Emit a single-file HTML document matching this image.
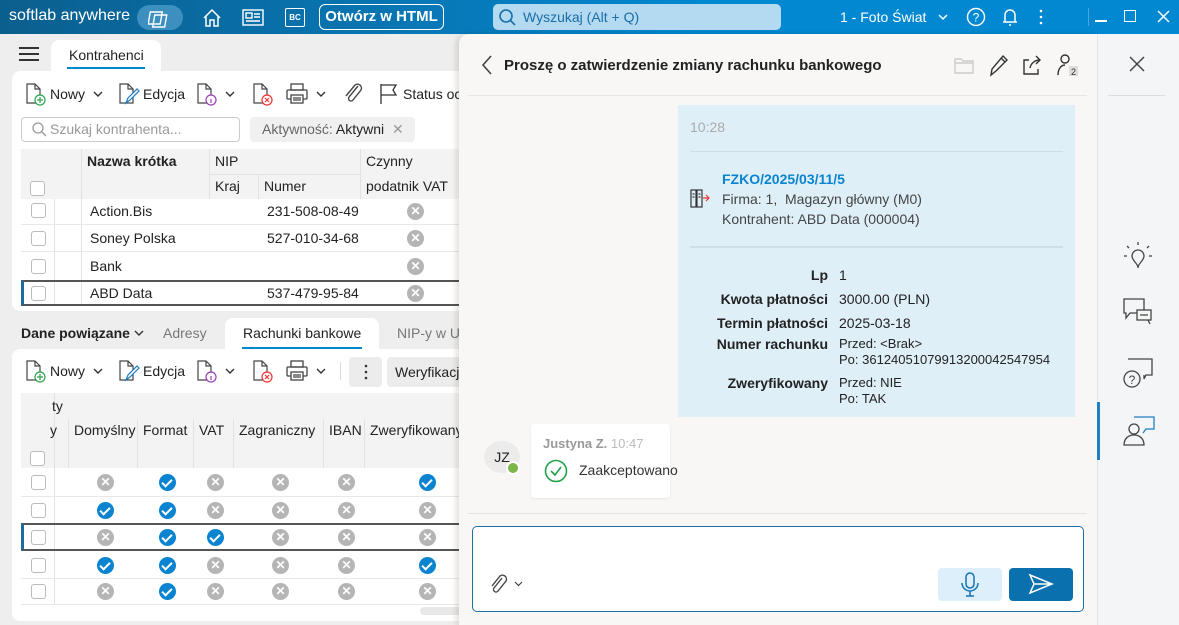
<!DOCTYPE html>
<html><head><meta charset="utf-8"><style>
*{box-sizing:border-box;margin:0;padding:0}
body{width:1179px;height:625px;overflow:hidden;font-family:"Liberation Sans",sans-serif;font-size:14px;color:#222;background:#eee;position:relative}
.a{position:absolute}
.top{left:0;top:0;width:1179px;height:34px;background:linear-gradient(90deg,#0b5f8e 0%,#0877b5 35%,#0288d1 60%,#0288d1 100%);color:#fff}
.card{background:#fff;border-radius:8px}
.cb{width:15px;height:15px;border:1px solid #bbb;border-radius:3px;background:#fff}
.x{width:17px;height:17px;border-radius:50%;background:#b5b5b5;color:#fff;font-size:12px;line-height:17px;text-align:center;font-weight:bold}
.ok{width:17px;height:17px;border-radius:50%;background:#0a84d0}
.ok:after{content:"";position:absolute;left:5px;top:3px;width:4px;height:8px;border:solid #fff;border-width:0 2px 2px 0;transform:rotate(45deg)}
.tb{font-size:14px;color:#222}
</style></head><body>
<svg width="0" height="0" style="position:absolute"><defs>
<g id="doc" fill="none" stroke="#444" stroke-width="1.2"><path d="M2 2h8l5 5v14H2z"/><path d="M10 2v5h5"/></g>
</defs></svg>
<!-- title bar -->
<div class="a top">
 <div class="a" style="left:9px;top:7px;font-size:16px">softlab anywhere</div>
 <div class="a" style="left:137px;top:5px;width:46px;height:25px;border-radius:13px;background:#3d8fc0"></div>
 <svg class="a" style="left:148px;top:8px" width="24" height="20" fill="none" stroke="#fff" stroke-width="1.4"><rect x="3" y="4" width="12" height="12" transform="skewX(-10)"/><rect x="8" y="7" width="12" height="12" transform="skewX(-10)"/></svg>
 <svg class="a" style="left:202px;top:8px" width="20" height="20" fill="none" stroke="#fff" stroke-width="1.5"><path d="M2 10L10 2l8 8M4 8v10h4v-6h4v6h4V8"/></svg>
 <svg class="a" style="left:242px;top:9px" width="22" height="17" fill="none" stroke="#fff" stroke-width="1.4"><rect x="1" y="1" width="20" height="15"/><rect x="4" y="4" width="6" height="5"/><path d="M12 5h6M12 8h6M4 12h14"/></svg>
 <div class="a" style="left:285px;top:8px;width:20px;height:19px;border:1.5px solid #fff;border-radius:2px;font-size:8px;text-align:center;line-height:17px;font-weight:bold">BC</div>
 <div class="a" style="left:319px;top:4px;width:125px;height:26px;border:1.5px solid #fff;border-radius:6px;text-align:center;line-height:23px;font-size:15px;font-weight:bold">Otwórz w HTML</div>
 <div class="a" style="left:493px;top:4px;width:288px;height:26px;border-radius:5px;background:#b3daf1;color:#1a6da6;font-size:14px;line-height:26px;padding-left:30px">Wyszukaj (Alt + Q)</div>
 <svg class="a" style="left:499px;top:9px" width="18" height="18" fill="none" stroke="#1a6da6" stroke-width="1.6"><circle cx="7" cy="7" r="6"/><path d="M11 11l5 5"/></svg>
 <div class="a" style="left:840px;top:9px;font-size:14px">1 - Foto Świat</div>
 <svg class="a" style="left:938px;top:14px" width="10" height="8" fill="none" stroke="#fff" stroke-width="1.5"><path d="M1 1l4 4 4-4"/></svg>
 <svg class="a" style="left:966px;top:7px" width="20" height="20" fill="none" stroke="#fff" stroke-width="1.4"><circle cx="10" cy="10" r="8.5"/><text x="10" y="14.5" font-size="12" fill="#fff" stroke="none" text-anchor="middle" font-family="Liberation Sans">?</text></svg>
 <svg class="a" style="left:1001px;top:6px" width="18" height="22" fill="none" stroke="#fff" stroke-width="1.5"><path d="M4 16V9a5 5 0 0110 0v7H2h14M8 19h2"/></svg>
 <svg class="a" style="left:1038px;top:8px" width="6" height="18" fill="#fff"><circle cx="3" cy="3" r="1.3"/><circle cx="3" cy="9" r="1.3"/><circle cx="3" cy="15" r="1.3"/></svg>
 <div class="a" style="left:1088px;top:8px;width:1px;height:18px;background:#4aa6de"></div>
 <div class="a" style="left:1095px;top:20px;width:12px;height:1.5px;background:#fff"></div>
 <div class="a" style="left:1124px;top:10px;width:12px;height:12px;border:1.5px solid #fff"></div>
 <svg class="a" style="left:1157px;top:10px" width="13" height="13" stroke="#fff" stroke-width="1.5"><path d="M1 1l11 11M12 1L1 12"/></svg>
</div>

<!-- left top tab -->
<div class="a" style="left:19px;top:47px;width:20px;height:14px;border-top:2px solid #333;border-bottom:2px solid #333"><div style="margin-top:4px;height:2px;background:#333"></div></div>
<div class="a" style="left:51px;top:40px;width:110px;height:40px;background:#fff;border-radius:8px 8px 0 0"></div>
<div class="a" style="left:69px;top:47px;font-size:14px">Kontrahenci</div>
<div class="a" style="left:67px;top:67px;width:78px;height:2px;background:#0288d1"></div>
<div class="a card" style="left:12px;top:71px;width:460px;height:240px"></div>
<!-- toolbar 1 -->
<svg class="a" style="left:25px;top:82px" width="22" height="24"><use href="#doc"/><circle cx="15" cy="18" r="5" fill="#fff" stroke="#2aa34a" stroke-width="1.2"/><path d="M15 15v6M12 18h6" stroke="#2aa34a" stroke-width="1.2"/></svg>
<div class="a tb" style="left:50px;top:86px">Nowy</div>
<svg class="a" style="left:93px;top:91px" width="10" height="7" fill="none" stroke="#333" stroke-width="1.4"><path d="M1 1l4 4 4-4"/></svg>
<svg class="a" style="left:118px;top:82px" width="24" height="24"><use href="#doc"/><path d="M8 21l2-5 9-9 2 2-9 9z" fill="#fff" stroke="#1a7cc4" stroke-width="1.2"/></svg>
<div class="a tb" style="left:143px;top:86px">Edycja</div>
<svg class="a" style="left:196px;top:82px" width="22" height="24"><use href="#doc"/><circle cx="15" cy="18" r="5" fill="#fff" stroke="#9b3fb4" stroke-width="1.2"/><path d="M15 17v4" stroke="#9b3fb4" stroke-width="1.2"/></svg>
<svg class="a" style="left:225px;top:91px" width="10" height="7" fill="none" stroke="#333" stroke-width="1.4"><path d="M1 1l4 4 4-4"/></svg>
<svg class="a" style="left:252px;top:82px" width="22" height="24"><use href="#doc"/><circle cx="15" cy="18" r="5" fill="#fff" stroke="#e33" stroke-width="1.2"/><path d="M13 16l4 4M17 16l-4 4" stroke="#e33" stroke-width="1.2"/></svg>
<svg class="a" style="left:286px;top:83px" width="22" height="22" fill="none" stroke="#444" stroke-width="1.3"><rect x="5" y="1" width="12" height="6"/><rect x="1" y="7" width="20" height="9" rx="1"/><rect x="5" y="12" width="12" height="8" fill="#fff"/><path d="M7 15h8M7 17h8"/></svg>
<svg class="a" style="left:316px;top:91px" width="10" height="7" fill="none" stroke="#333" stroke-width="1.4"><path d="M1 1l4 4 4-4"/></svg>
<svg class="a" style="left:343px;top:82px" width="20" height="24" fill="none" stroke="#444" stroke-width="1.4"><path d="M15 4L6 15a2.5 2.5 0 004 3l8-10a4 4 0 00-6-5L3 14"/></svg>
<svg class="a" style="left:379px;top:83px" width="20" height="22" fill="none" stroke="#333" stroke-width="1.3"><path d="M2 1v20M2 2h15l-3 5 3 5H2"/></svg>
<div class="a tb" style="left:403px;top:86px">Status oc</div>
<div class="a" style="left:21px;top:117px;width:219px;height:25px;border:1px solid #ccc;border-radius:4px;color:#999;line-height:23px;padding-left:28px;font-size:14px">Szukaj kontrahenta...</div>
<svg class="a" style="left:32px;top:122px" width="15" height="15" fill="none" stroke="#999" stroke-width="1.3"><circle cx="6" cy="6" r="5"/><path d="M10 10l4 4"/></svg>
<div class="a" style="left:250px;top:117px;width:165px;height:25px;background:#f0f0f0;border-radius:4px;line-height:25px;padding-left:12px;font-size:14px;color:#666">Aktywność: <span style="color:#222">Aktywni</span> <span style="color:#999;margin-left:4px">✕</span></div>
<!-- grid 1 -->
<div class="a" style="left:21px;top:149px;width:439px;height:50px;background:#f3f3f3"></div>
<div class="a" style="left:81px;top:149px;width:1px;height:156px;background:#e2e2e2"></div>
<div class="a" style="left:54px;top:199px;width:1px;height:106px;background:#e2e2e2"></div>
<div class="a" style="left:209px;top:149px;width:1px;height:50px;background:#e2e2e2"></div>
<div class="a" style="left:258px;top:174px;width:1px;height:25px;background:#e2e2e2"></div>
<div class="a" style="left:360px;top:149px;width:1px;height:50px;background:#e2e2e2"></div>
<div class="a" style="left:209px;top:174px;width:151px;height:1px;background:#e2e2e2"></div>
<div class="a" style="left:87px;top:153px;font-weight:bold;font-size:14px">Nazwa krótka</div>
<div class="a" style="left:215px;top:153px">NIP</div>
<div class="a" style="left:366px;top:153px">Czynny</div>
<div class="a" style="left:215px;top:178px">Kraj</div>
<div class="a" style="left:264px;top:178px">Numer</div>
<div class="a" style="left:366px;top:178px">podatnik VAT</div>
<div class="a cb" style="left:30px;top:181px"></div>
<div class="a" style="left:21px;top:224px;width:439px;height:1px;background:#e8e8e8"></div>
<div class="a" style="left:21px;top:251px;width:439px;height:1px;background:#e8e8e8"></div>
<div class="a" style="left:21px;top:280px;width:439px;height:26px;border:2px solid #555;border-left:3px solid #1c6aa0;border-right:none"></div>
<div class="a cb" style="left:31px;top:203px"></div><div class="a" style="left:90px;top:203px">Action.Bis</div><div class="a" style="left:267px;top:203px">231-508-08-49</div><div class="a x" style="left:407px;top:203px">✕</div>
<div class="a cb" style="left:31px;top:231px"></div><div class="a" style="left:90px;top:230px">Soney Polska</div><div class="a" style="left:267px;top:230px">527-010-34-68</div><div class="a x" style="left:407px;top:230px">✕</div>
<div class="a cb" style="left:31px;top:259px"></div><div class="a" style="left:90px;top:258px">Bank</div><div class="a x" style="left:407px;top:258px">✕</div>
<div class="a cb" style="left:31px;top:286px"></div><div class="a" style="left:90px;top:285px">ABD Data</div><div class="a" style="left:267px;top:285px">537-479-95-84</div><div class="a x" style="left:407px;top:285px">✕</div>

<!-- bottom tabs -->
<div class="a" style="left:21px;top:325px;font-weight:bold">Dane powiązane</div>
<svg class="a" style="left:134px;top:330px" width="10" height="7" fill="none" stroke="#333" stroke-width="1.4"><path d="M1 1l4 4 4-4"/></svg>
<div class="a" style="left:163px;top:325px;color:#777">Adresy</div>
<div class="a" style="left:225px;top:318px;width:154px;height:40px;background:#fff;border-radius:8px 8px 0 0"></div>
<div class="a" style="left:243px;top:325px">Rachunki bankowe</div>
<div class="a" style="left:242px;top:347px;width:120px;height:2px;background:#0288d1"></div>
<div class="a" style="left:397px;top:325px;color:#777">NIP-y w U</div>
<div class="a card" style="left:12px;top:349px;width:460px;height:272px"></div>
<svg class="a" style="left:25px;top:359px" width="22" height="24"><use href="#doc"/><circle cx="15" cy="18" r="5" fill="#fff" stroke="#2aa34a" stroke-width="1.2"/><path d="M15 15v6M12 18h6" stroke="#2aa34a" stroke-width="1.2"/></svg>
<div class="a tb" style="left:50px;top:363px">Nowy</div>
<svg class="a" style="left:93px;top:368px" width="10" height="7" fill="none" stroke="#333" stroke-width="1.4"><path d="M1 1l4 4 4-4"/></svg>
<svg class="a" style="left:118px;top:359px" width="24" height="24"><use href="#doc"/><path d="M8 21l2-5 9-9 2 2-9 9z" fill="#fff" stroke="#1a7cc4" stroke-width="1.2"/></svg>
<div class="a tb" style="left:143px;top:363px">Edycja</div>
<svg class="a" style="left:196px;top:359px" width="22" height="24"><use href="#doc"/><circle cx="15" cy="18" r="5" fill="#fff" stroke="#9b3fb4" stroke-width="1.2"/><path d="M15 17v4" stroke="#9b3fb4" stroke-width="1.2"/></svg>
<svg class="a" style="left:225px;top:368px" width="10" height="7" fill="none" stroke="#333" stroke-width="1.4"><path d="M1 1l4 4 4-4"/></svg>
<svg class="a" style="left:252px;top:359px" width="22" height="24"><use href="#doc"/><circle cx="15" cy="18" r="5" fill="#fff" stroke="#e33" stroke-width="1.2"/><path d="M13 16l4 4M17 16l-4 4" stroke="#e33" stroke-width="1.2"/></svg>
<svg class="a" style="left:286px;top:360px" width="22" height="22" fill="none" stroke="#444" stroke-width="1.3"><rect x="5" y="1" width="12" height="6"/><rect x="1" y="7" width="20" height="9" rx="1"/><rect x="5" y="12" width="12" height="8" fill="#fff"/><path d="M7 15h8M7 17h8"/></svg>
<svg class="a" style="left:316px;top:368px" width="10" height="7" fill="none" stroke="#333" stroke-width="1.4"><path d="M1 1l4 4 4-4"/></svg>
<div class="a" style="left:340px;top:362px;width:1px;height:18px;background:#ddd"></div>
<div class="a" style="left:349px;top:357px;width:33px;height:30px;background:#ececec;border-radius:4px"></div>
<svg class="a" style="left:363px;top:363px" width="6" height="18" fill="#333"><circle cx="3" cy="3" r="1.3"/><circle cx="3" cy="9" r="1.3"/><circle cx="3" cy="15" r="1.3"/></svg>
<div class="a" style="left:387px;top:357px;width:80px;height:30px;background:#ececec;border-radius:4px;line-height:30px;padding-left:8px">Weryfikacja</div>
<div class="a" style="left:21px;top:393px;width:439px;height:75px;background:#f3f3f3"></div>
<div class="a" style="left:54px;top:393px;width:1px;height:212px;background:#e2e2e2"></div>
<div class="a" style="left:52px;top:398px">ty</div>
<div class="a" style="left:50px;top:422px">y</div>
<div class="a" style="left:74px;top:422px">Domyślny</div>
<div class="a" style="left:143px;top:422px">Format</div>
<div class="a" style="left:199px;top:422px">VAT</div>
<div class="a" style="left:239px;top:422px">Zagraniczny</div>
<div class="a" style="left:329px;top:422px">IBAN</div>
<div class="a" style="left:370px;top:422px">Zweryfikowany</div>
<div class="a" style="left:68px;top:419px;width:1px;height:49px;background:#e2e2e2"></div>
<div class="a" style="left:137px;top:419px;width:1px;height:49px;background:#e2e2e2"></div>
<div class="a" style="left:193px;top:419px;width:1px;height:49px;background:#e2e2e2"></div>
<div class="a" style="left:233px;top:419px;width:1px;height:49px;background:#e2e2e2"></div>
<div class="a" style="left:323px;top:419px;width:1px;height:49px;background:#e2e2e2"></div>
<div class="a" style="left:364px;top:419px;width:1px;height:49px;background:#e2e2e2"></div>
<div class="a cb" style="left:30px;top:451px"></div>
<div class="a" style="left:21px;top:496px;width:439px;height:1px;background:#e8e8e8"></div>
<div class="a" style="left:21px;top:578px;width:439px;height:1px;background:#e8e8e8"></div>
<div class="a" style="left:21px;top:604px;width:439px;height:1px;background:#e8e8e8"></div>
<div class="a" style="left:21px;top:523px;width:439px;height:28px;border:2px solid #555;border-left:3px solid #1c6aa0;border-right:none"></div>
<div class="a cb" style="left:31px;top:475px"></div><div class="a x" style="left:97px;top:474px">✕</div><div class="a ok" style="left:159px;top:474px"></div><div class="a x" style="left:207px;top:474px">✕</div><div class="a x" style="left:272px;top:474px">✕</div><div class="a x" style="left:338px;top:474px">✕</div><div class="a ok" style="left:419px;top:474px"></div>
<div class="a cb" style="left:31px;top:503px"></div><div class="a ok" style="left:97px;top:502px"></div><div class="a ok" style="left:159px;top:502px"></div><div class="a x" style="left:207px;top:502px">✕</div><div class="a x" style="left:272px;top:502px">✕</div><div class="a x" style="left:338px;top:502px">✕</div><div class="a x" style="left:419px;top:502px">✕</div>
<div class="a cb" style="left:31px;top:530px"></div><div class="a x" style="left:97px;top:529px">✕</div><div class="a ok" style="left:159px;top:529px"></div><div class="a ok" style="left:207px;top:529px"></div><div class="a x" style="left:272px;top:529px">✕</div><div class="a x" style="left:338px;top:529px">✕</div><div class="a x" style="left:419px;top:529px">✕</div>
<div class="a cb" style="left:31px;top:558px"></div><div class="a ok" style="left:97px;top:557px"></div><div class="a ok" style="left:159px;top:557px"></div><div class="a x" style="left:207px;top:557px">✕</div><div class="a x" style="left:272px;top:557px">✕</div><div class="a x" style="left:338px;top:557px">✕</div><div class="a ok" style="left:419px;top:557px"></div>
<div class="a cb" style="left:31px;top:584px"></div><div class="a x" style="left:97px;top:583px">✕</div><div class="a ok" style="left:159px;top:583px"></div><div class="a x" style="left:207px;top:583px">✕</div><div class="a x" style="left:272px;top:583px">✕</div><div class="a x" style="left:338px;top:583px">✕</div><div class="a x" style="left:419px;top:583px">✕</div>
<div class="a" style="left:420px;top:607px;width:45px;height:8px;background:#e8e8e8;border-radius:4px"></div>

<!-- right chat panel -->
<div class="a" style="left:459px;top:34px;width:638px;height:591px;background:#f8f7f6;border-radius:10px 0 0 0;box-shadow:-3px 0 6px rgba(0,0,0,.12)"></div>
<svg class="a" style="left:480px;top:54px" width="14" height="22" fill="none" stroke="#444" stroke-width="1.6"><path d="M11 2L3 11l8 9"/></svg>
<div class="a" style="left:504px;top:57px;font-size:15px;font-weight:bold;color:#222">Proszę o zatwierdzenie zmiany rachunku bankowego</div>
<svg class="a" style="left:953px;top:55px" width="22" height="20" fill="none" stroke="#ccc" stroke-width="1.4"><path d="M2 4h6l2 2h10v12H2zM2 8h18"/></svg>
<svg class="a" style="left:987px;top:53px" width="22" height="24" fill="none" stroke="#333" stroke-width="1.4"><path d="M4 22l1-6L16 3l4 4L9 18zM14 5l4 4"/></svg>
<svg class="a" style="left:1021px;top:54px" width="22" height="22" fill="none" stroke="#333" stroke-width="1.4"><path d="M8 6H3v14h14v-5M9 14c1-5 5-8 10-8M15 2l4 4-4 4"/></svg>
<svg class="a" style="left:1055px;top:52px" width="24" height="26" fill="none" stroke="#333" stroke-width="1.4"><circle cx="10" cy="7" r="4"/><path d="M3 23c0-6 3-10 7-10"/><rect x="14" y="14" width="9" height="10" fill="#ddd" stroke="none"/><text x="18.5" y="23" font-size="9" fill="#333" stroke="none" text-anchor="middle" font-family="Liberation Sans">2</text></svg>
<div class="a" style="left:468px;top:95px;width:619px;height:1px;background:#e6e6e6"></div>
<div class="a" style="left:678px;top:105px;width:397px;height:312px;background:#dfeff8"></div>
<div class="a" style="left:690px;top:119px;color:#aaa;font-size:14px">10:28</div>
<div class="a" style="left:690px;top:151px;width:373px;height:1px;background:#cfdde5"></div>
<div class="a" style="left:722px;top:171px;color:#0a84d0;font-weight:bold;font-size:14px">FZKO/2025/03/11/5</div>
<svg class="a" style="left:690px;top:189px" width="22" height="20" fill="none" stroke="#333" stroke-width="1.2"><rect x="1" y="1" width="5" height="17"/><rect x="7" y="1" width="5" height="17"/><path d="M2.5 5h2M2.5 8h2M8.5 5h2M8.5 8h2"/><path d="M13 9h6M16 6l3 3-3 3" stroke="#e33"/></svg>
<div class="a" style="left:722px;top:191px;color:#444;font-size:14px">Firma: 1,&nbsp; Magazyn główny (M0)</div>
<div class="a" style="left:722px;top:211px;color:#444;font-size:14px">Kontrahent: ABD Data (000004)</div>
<div class="a" style="left:690px;top:246px;width:373px;height:2px;background:#cfdde5"></div>
<div class="a" style="left:678px;top:263px;width:150px;text-align:right;font-weight:bold;line-height:24px;font-size:14px">Lp<br>Kwota płatności<br>Termin płatności</div>
<div class="a" style="left:678px;top:336px;width:150px;text-align:right;font-weight:bold;font-size:14px">Numer rachunku</div>
<div class="a" style="left:678px;top:375px;width:150px;text-align:right;font-weight:bold;font-size:14px">Zweryfikowany</div>
<div class="a" style="left:839px;top:263px;line-height:24px;font-size:14px">1<br>3000.00 (PLN)<br>2025-03-18</div>
<div class="a" style="left:839px;top:336px;line-height:16px;font-size:13px">Przed: &lt;Brak&gt;<br>Po: 36124051079913200042547954</div>
<div class="a" style="left:839px;top:375px;line-height:16px;font-size:13px">Przed: NIE<br>Po: TAK</div>
<div class="a" style="left:484px;top:441px;width:36px;height:32px;border-radius:50%;background:#ebebeb;text-align:center;line-height:32px;font-size:14px">JZ</div>
<div class="a" style="left:506px;top:461px;width:14px;height:14px;border-radius:50%;background:#7ab648;border:2px solid #fff"></div>
<div class="a" style="left:531px;top:424px;width:139px;height:74px;background:#fff;border-radius:3px;box-shadow:0 1px 2px rgba(0,0,0,.08)"></div>
<div class="a" style="left:543px;top:436px;color:#999;font-size:13px"><b>Justyna Z.</b> <span style="color:#bbb">10:47</span></div>
<svg class="a" style="left:544px;top:459px" width="24" height="24" fill="none" stroke="#21a04a" stroke-width="1.6"><circle cx="12" cy="12" r="10.5"/><path d="M7 12l4 4 6-8"/></svg>
<div class="a" style="left:579px;top:462px;color:#333;font-size:14px">Zaakceptowano</div>
<div class="a" style="left:468px;top:513px;width:619px;height:1px;background:#e2e2e2"></div>
<div class="a" style="left:472px;top:526px;width:612px;height:86px;background:#fff;border:1.3px solid #1e6ea3;border-radius:5px"></div>
<svg class="a" style="left:488px;top:572px" width="20" height="24" fill="none" stroke="#444" stroke-width="1.4"><path d="M14 6L6 16a2.5 2.5 0 004 3l8-10a4 4 0 00-6-5L4 14"/></svg>
<svg class="a" style="left:514px;top:581px" width="9" height="6" fill="none" stroke="#444" stroke-width="1.2"><path d="M1 1l3.5 3.5L8 1"/></svg>
<div class="a" style="left:938px;top:568px;width:64px;height:33px;background:#dceffa;border-radius:4px"></div>
<svg class="a" style="left:960px;top:572px" width="20" height="26" fill="none" stroke="#1474b4" stroke-width="1.5"><rect x="6" y="1" width="8" height="15" rx="4"/><path d="M2 11a8 8 0 0016 0M10 19v5M6 24h8"/></svg>
<div class="a" style="left:1009px;top:568px;width:64px;height:33px;background:#0a70ae;border-radius:4px"></div>
<svg class="a" style="left:1028px;top:573px" width="26" height="22" fill="none" stroke="#fff" stroke-width="1.5"><path d="M2 2l22 9-22 9 4-9zM6 11h18"/></svg>

<!-- right sidebar -->
<div class="a" style="left:1097px;top:34px;width:82px;height:591px;background:#f3f5f7;border-left:1px solid #e4e4e4"></div>
<svg class="a" style="left:1129px;top:56px" width="16" height="16" stroke="#444" stroke-width="1.5"><path d="M1 1l14 14M15 1L1 15"/></svg>
<div class="a" style="left:1108px;top:95px;width:57px;height:1px;background:#ddd"></div>
<svg class="a" style="left:1122px;top:240px" width="32" height="32" fill="none" stroke="#444" stroke-width="1.3"><path d="M16 28c0-5-6-7-6-12a6 6 0 0112 0c0 5-6 7-6 12M16 2v3M5 6l2 2M27 6l-2 2M2 16h3M27 16h3"/></svg>
<svg class="a" style="left:1122px;top:297px" width="34" height="32" fill="none" stroke="#444" stroke-width="1.3"><path d="M2 2h20v14H8l-4 5v-5H2z"/><rect x="15" y="13" width="14" height="10" fill="#f3f5f7"/><path d="M18 18h8M26 23l2 4"/></svg>
<svg class="a" style="left:1122px;top:357px" width="34" height="34" fill="none" stroke="#444" stroke-width="1.3"><path d="M6 2h24v16h-6l-2 4v-4"/><circle cx="10" cy="22" r="8" fill="#f3f5f7"/><text x="10" y="27" font-size="12" fill="#444" stroke="none" text-anchor="middle" font-family="Liberation Sans">?</text></svg>
<div class="a" style="left:1097px;top:402px;width:3px;height:58px;background:#1f7fc2"></div>
<svg class="a" style="left:1122px;top:415px" width="34" height="32" fill="none" stroke="#444" stroke-width="1.3"><path d="M12 2h20v12h-8l-3 4" stroke="#1f7fc2"/><circle cx="12" cy="14" r="5"/><path d="M2 30c0-6 4-10 10-10s10 4 10 10z"/></svg>
</body></html>
